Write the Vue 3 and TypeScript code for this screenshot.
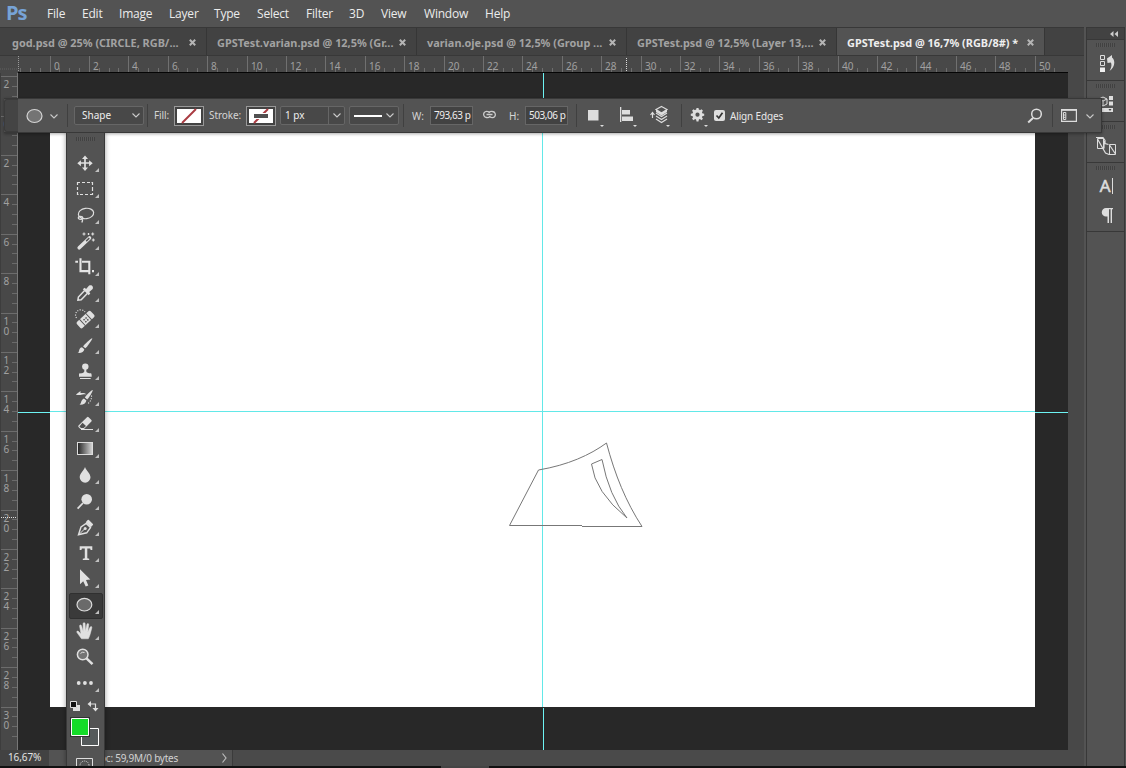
<script setup lang="ts">
interface Tab { title: string; active?: boolean; width: number }
interface Tool { name: string; art: string; active?: boolean; flyout?: boolean }

const menus = [
  ['File', 35], ['Edit', 37], ['Image', 50], ['Layer', 45], ['Type', 43], ['Select', 49],
  ['Filter', 43], ['3D', 32], ['View', 43], ['Window', 61], ['Help', 40],
] as const

const tabs: Tab[] = [
  { title: 'god.psd @ 25% (CIRCLE, RGB/...', width: 206 },
  { title: 'GPSTest.varian.psd @ 12,5% (Gr...', width: 210 },
  { title: 'varian.oje.psd @ 12,5% (Group ...', width: 210 },
  { title: 'GPSTest.psd @ 12,5% (Layer 13,...', width: 210 },
  { title: 'GPSTest.psd @ 16,7% (RGB/8#) *', width: 208, active: true },
]

const unit = 19.7
const hMajor = Array.from({ length: 26 }, (_, i) => ({ label: String(i * 2), at: Math.floor(50 + i * 2 * unit) }))
const hMinor = Array.from({ length: 106 }, (_, i) => i - 3)
  .filter(i => i % 4 !== 0 && 50 + i * unit / 2 < 1068)
  .map(i => Math.floor(50 + i * unit / 2))
const vMajor = Array.from({ length: 17 }, (_, i) => i * 2 - 2)
  .map(n => ({ digits: String(Math.abs(n)).split(''), at: Math.floor(116 + n * unit) - 73 }))
  .filter(m => m.at < 677)
const vMinor = Array.from({ length: 70 }, (_, i) => i - 3)
  .filter(i => i % 4 !== 0 && 43 + i * unit / 2 < 677)
  .map(i => Math.floor(43 + i * unit / 2))

const tools: Tool[] = [
  { name: 'Move', art: '<path d="M12 6v12M6 12h12" stroke="#e0e0e0" stroke-width="1.7"/><path d="M12 4.500l3 3.6H9zM12 20l3-3.6H9zM4.300 12.200l3.600-3v6zM19.700 12.200l-3.600-3v6z"/>' },
  { name: 'Marquee', art: '<path d="M4.500 8V5.500H7M9 5.500h3M14 5.500h3M18.500 5.500h1V8M19.500 10v4M19.500 16v1.500H17M15 17.500h-3M10 17.500H7M5.500 17.500h-1V15M4.500 13v-3" fill="none" stroke="#e0e0e0" stroke-width="1.2"/>' },
  { name: 'Lasso', art: '<g fill="none" stroke="#dedede" stroke-width="1.2"><ellipse cx="13" cy="10.500" rx="7.700" ry="5.200" transform="rotate(-8 13 10.500)"/><ellipse cx="7.500" cy="14.800" rx="2.200" ry="1.500"/><path d="M8.500 15.500q2 2 .2 4"/></g>' },
  { name: 'Magic wand', art: '<path d="M6.200 18.800L16.500 9" stroke="#e0e0e0" stroke-width="3.600" stroke-linecap="round"/><path d="M13.200 12.100L16.300 9.100" stroke="#555" stroke-width="1.500"/><path d="M11 3.500v3M9.500 5h3M19.700 3.500v3M18.200 5h3M20.300 9.500v3M18.800 11h3M15.500 4v2M14.700 5h1.700" stroke="#e0e0e0" stroke-width="1.100"/>' },
  { name: 'Crop', art: '<path d="M7.500 3.300v12.800H17M19 16.100h2M2.300 6.800H5M9 6.800h7.300v12.500" fill="none" stroke="#e4e4e4" stroke-width="2.100"/>' },
  { name: 'Eyedropper', art: '<path d="M11.600 9.500L5.400 16l-.5 3.200 3.300-.5 6.300-6.400" fill="none" stroke="#e0e0e0" stroke-width="1.500"/><path d="M9.800 8.300l1.800-1.500 1.500 1.100 2.800-3.200c2.500-1.700 5.300 1.100 3.500 3.600L16.200 11l1.100 1.500-1.600 1.700z"/>' },
  { name: 'Healing brush', art: '<g transform="rotate(-43 12.500 12.500)"><rect x="3" y="8.500" width="19" height="8.200" rx="1.800"/><path d="M8.200 8v9M16.800 8v9" stroke="#555" stroke-width="1"/><path d="M10.500 11h1.500v1.500h-1.500zM13.200 11h1.500v1.500h-1.500zM10.500 13.600h1.500v1.500h-1.500zM13.200 13.600h1.500v1.500h-1.500z" fill="#505050"/></g><path d="M3.500 11A4.600 4.600 0 0 1 12 5" fill="none" stroke="#e0e0e0" stroke-width="1.200" stroke-dasharray="1.100 1.400"/>' },
  { name: 'Brush', art: '<path d="M19.300 5.200c.6.600-5.800 9.700-7.100 10L10 13.300C10.800 11.900 18.600 4.600 19.300 5.200z"/><path d="M9 14.200l2.300 2.100c-.2 3-3.700 4.100-6.800 3.500 1.900-.9 1.300-2 2-3.600.5-1.200 1.500-1.900 2.500-2z"/>' },
  { name: 'Clone stamp', art: '<circle cx="12.300" cy="7.600" r="3.200"/><path d="M11.300 9h2v3.200c0 1.600 2.200 2 4.700 2 .7.500.7 2.500.7 3.500H6v-3c.5-.6 5.300 0 5.300-2.500zM7 19.100h10.700v1H7z"/>' },
  { name: 'History brush', art: '<path d="M19.700 5.100c.6.600-4.200 8.800-5.500 9.300l-2.300-1.800C12.300 11.200 19 4.500 19.700 5.100z"/><path d="M10.900 13.500l2.500 2c-.5 3.300-3.800 4.500-6.900 4.100 1.600-.9 1.300-2.100 2-3.600.6-1.200 1.300-2.100 2.400-2.500zM3.300 9.200L7.500 6v2.100c2.400-.4 4.300-.2 6 1.300-2.200-.3-4.700.2-6.200.7L3.300 10z"/><path d="M18.500 10.500q.5 5.500-4.500 8.700" fill="none" stroke="#e0e0e0" stroke-width="1.100" stroke-dasharray="1.100 1.500"/>' },
  { name: 'Eraser', art: '<path d="M14 6.200q.8-.7 1.600 0l2.800 2.700q.7.800 0 1.500L11 18H7.500l-2-2q-.6-.8 0-1.500z"/><path d="M9.500 11.700l3.500 3.200-2.300 2.200H8l-1.600-1.700z" fill="#505050"/><path d="M8 18.500h12" stroke="#e0e0e0"/>' },
  { name: 'Gradient', art: '<defs><linearGradient id="toolGradient"><stop offset="0" stop-color="#222"/><stop offset="1" stop-color="#d8d8d8"/></linearGradient></defs><rect x="4.500" y="5.500" width="15" height="12" fill="url(#toolGradient)" stroke="#ddd"/>' },
  { name: 'Blur', art: '<path d="M12 4c1 3.500 5.500 6.400 5.500 10.300A5.400 5.400 0 0 1 6.700 14.300C6.700 10.400 11 7.500 12 4z"/>' },
  { name: 'Dodge', art: '<circle cx="13.700" cy="10.200" r="5.300"/><path d="M10 14l-5.400 5.600" stroke="#e0e0e0" stroke-width="1.800"/>' },
  { name: 'Pen', art: '<path d="M5.500 19.700L8 12l5.200-3.600 4.300 4.200-3.800 5.200z" fill="none" stroke="#e0e0e0" stroke-width="1.400"/><path d="M6 19.500l5.800-5.800" stroke="#e0e0e0"/><circle cx="12.200" cy="13.400" r="1.500"/><path d="M12.700 7.300l2-2.300q.7-.5 1.200 0l4 4.100q.4.500 0 1l-2.100 2.200z"/>' },
  { name: 'Type', art: '<path d="M6.700 5.300h12.600v3.800h-1.700l-.4-1.700h-2.900v9.900l1.900.5v1.300h-6.400v-1.300l2-.5V7.400H8.900l-.5 1.700H6.700z"/>' },
  { name: 'Path selection', art: '<path d="M7 2.300l10.300 10.300-4.300.3 2.300 5.600-2.600 1.100-2.500-5.400L7 17.200z"/>' },
  { name: 'Ellipse', art: '<ellipse cx="11.400" cy="11.700" rx="7.400" ry="6.300" fill="#6a6a6a" stroke="#dcdcdc" stroke-width="1.200"/>', active: true },
  { name: 'Hand', art: '<path d="M8.500 19.800L4 13.600c-.8-1.400.7-2.100 1.600-1.100L8 15 6.600 7.200c-.2-1.500 1.500-1.800 1.900-.4l1.600 5.400V4.700c0-1.400 1.900-1.400 2 0l.4 7.200 1.400-6.500c.4-1.400 2-1 1.800.4l-.9 7.100 2.300-4.700c.7-1.300 2.100-.6 1.700.7-1.200 4.400-1.800 8-3.500 10.900z" stroke="#e0e0e0" stroke-width=".5"/>' },
  { name: 'Zoom', art: '<circle cx="9.700" cy="9.500" r="5.300" fill="#747474" stroke="#e0e0e0" stroke-width="1.500"/><path d="M7.500 8.500Q9 6.500 11.500 7.500" fill="none" stroke="#ddd"/><path d="M13.500 13.400l6 5.700" stroke="#e0e0e0" stroke-width="2.500"/>', flyout: false },
  { name: 'More', art: '<circle cx="5.700" cy="12" r="1.900"/><circle cx="11.900" cy="12" r="1.900"/><circle cx="18" cy="12" r="1.900"/>' },
]
</script>

<template>
  <div class="app">
    <header class="menu-bar">
      <span class="logo">Ps</span>
      <span v-for="m in menus" :key="m[0]" class="menu" :style="{ width: m[1] + 'px' }">{{ m[0] }}</span>
    </header>

    <div class="body">
      <main class="main">
        <nav class="tabs">
          <div v-for="t in tabs" :key="t.title" class="tab" :class="{ active: t.active }" :style="{ width: t.width + 'px' }">
            <span>{{ t.title }}</span>
            <svg class="close" width="7" height="7" viewBox="0 0 7 7"><path d="M.8.8l5.400 5.400M6.200.800L.8 6.200" stroke="currentColor" stroke-width="2" /></svg>
          </div>
        </nav>

        <svg class="ruler-h" width="1084" height="17">
          <rect width="1068" height="17" fill="#484848" />
          <path d="M0 13h18" stroke="#606060" stroke-dasharray="1 1" />
          <path d="M18.500 0v15" stroke="#999" stroke-dasharray="1 1" />
          <path v-for="x in hMinor" :key="'n' + x" :d="`M${x + .5} 12v4`" stroke="#6d6d6d" />
          <g v-for="m in hMajor" :key="m.label">
            <path :d="`M${m.at + .5} 0v16`" stroke="#707070" />
            <text :x="m.at + 4" y="14">{{ m.label }}</text>
          </g>
          <path d="M626.500 2v14" stroke="#ddd" stroke-dasharray="1 1" />
          <path d="M18 16.500h1050" stroke="#050505" />
        </svg>

        <div class="work-row">
          <svg class="ruler-v" width="18" height="677">
            <rect width="18" height="677" fill="#484848" />
            <path v-for="y in vMinor" :key="'n' + y" :d="`M12 ${y + .5}h5`" stroke="#6a6a6a" />
            <g v-for="m in vMajor" :key="m.at">
              <path :d="`M1 ${m.at + .5}h16`" stroke="#6c6c6c" />
              <text v-for="(d, i) in m.digits" :key="i" x="3.500" :y="m.at + 11.500 + i * 10">{{ d }}</text>
            </g>
            <path d="M1 444.500h16" stroke="#ddd" stroke-dasharray="1 1" />
            <path d="M.5 0v677" stroke="#3d3d3d" />
            <path d="M17.500 0v677" stroke="#777" />
          </svg>
          <svg class="canvas" width="1050" height="677">
            <rect width="1050" height="677" fill="#282828" />
            <rect x="32" y="40" width="985" height="594" fill="#fff" />
            <g fill="#6df3f3">
              <rect x="525" width="1" height="40" /><rect x="525" y="635" width="1" height="42" />
              <rect y="339" width="32" height="1" /><rect x="1017" y="339" width="33" height="1" />
            </g>
            <g fill="#62e8e8">
              <rect x="524" y="40" width="1" height="594" /><rect x="32" y="338" width="985" height="1" />
            </g>
            <g fill="none" stroke="#777">
              <path d="M564 453.500H624C608 429 597 402 588.500 370C572 382 550 392 520.500 397L491.500 452.500H564" />
              <path d="M573.500 391L584 386.500Q591 423 609 445Q577 419 573.500 391z" />
            </g>
          </svg>
          <div class="scroll-v"></div>
        </div>

        <footer class="status">
          <span class="zoom-value">16,67%</span>
          <span class="doc">Doc: 59,9M/0 bytes</span>
          <svg width="8" height="12" viewBox="0 0 8 12"><path d="M1.500 1.500L5 6 1.500 10.500" fill="none" stroke="#bbb" stroke-width="1.200" /></svg>
          <span class="status-rest"></span>
        </footer>
      </main>

      <aside class="dock">
        <div class="dock-head">
          <svg width="8" height="6" viewBox="0 0 8 6"><path d="M3.500 0v6L0 3zM8 0v6L4.500 3z" fill="#ccc" /></svg>
        </div>
        <div class="group">
          <i class="grip"></i>
          <svg width="18" height="18" viewBox="0 0 18 18">
            <path d="M3.500 1.500h4v4h-4zM3.500 7.500h4v4h-4z" fill="none" stroke="#ddd" /><path d="M3 13.500h5v4.500H3z" fill="#f0f0f0" />
            <path d="M10 4.500L15 1v2.500c4 3.500 2.500 10-2.500 13.500 1.800-3 2.700-6.800 1.200-8.500L10.500 9z" fill="#ddd" />
          </svg>
        </div>
        <div class="group">
          <i class="grip"></i>
          <svg width="18" height="18" viewBox="0 0 18 18">
            <path d="M2 4l4-2 4 2v5l-4 2-4-2zM2 4l4 2 4-2M6 6v5" fill="none" stroke="#ddd" /><path d="M12 1h4v4h-4zM12 6.500h4v4h-4zM3 13h13v4H3z" fill="#ddd" /><path d="M11.500 14h3L13 16z" fill="#444" />
          </svg>
        </div>
        <div class="group">
          <i class="grip"></i>
          <svg width="20" height="20" viewBox="0 0 20 20">
            <path d="M1.500 2.500h6v10h-6zM13.500 8.500h6v10h-6z" fill="none" stroke="#ddd" />
            <path d="M0 1.500h7l2 3v3l3.500 1M1.500 3l8 14 3.500 1.500h3M8 12.500V5M13.500 9l6 9" fill="none" stroke="#ddd" stroke-width="1.200" />
          </svg>
        </div>
        <div class="group tall">
          <i class="grip"></i>
          <div class="char-icon"><span>A</span><b></b></div>
          <svg class="para" width="12" height="15" viewBox="0 0 12 15"><path d="M5 0h7v1.200h-1V15H9.600V1.200H8V15H6.500V8.500H5A4.200 4.200 0 0 1 5 0z" fill="#ddd" /></svg>
        </div>
      </aside>

      <section class="options">
        <div class="handle"></div>
        <svg class="shape-icon" width="18" height="16" viewBox="0 0 18 16"><ellipse cx="9.500" cy="8" rx="7.500" ry="6.500" fill="#747474" stroke="#d4d4d4" stroke-width="1.200" /></svg>
        <svg class="chev c1" width="8" height="5" viewBox="0 0 8 5"><path d="M.5.5L4 4 7.500.5" /></svg>
        <i class="sep s1"></i>
        <div class="field mode"><span>Shape</span><svg class="chev" width="8" height="5" viewBox="0 0 8 5"><path d="M.5.5L4 4 7.500.5" /></svg></div>
        <i class="sep s2"></i>
        <label class="fill-label">Fill:</label>
        <svg class="swatch" width="30" height="20" viewBox="0 0 30 20"><rect x=".5" y=".5" width="29" height="19" fill="#424242" stroke="#999" /><rect x="3" y="3" width="24" height="14" fill="#fff" /><path d="M8 17L22 3" stroke="#a93b42" stroke-width="2" /></svg>
        <label class="stroke-label">Stroke:</label>
        <svg class="swatch" width="30" height="20" viewBox="0 0 30 20"><rect x=".5" y=".5" width="29" height="19" fill="#424242" stroke="#999" /><rect x="3" y="3" width="24" height="14" fill="#fff" /><path d="M8 17L22 3" stroke="#a93b42" stroke-width="2" /><path d="M7 7h16v6H7z" fill="#fff" /><path d="M8 8h14v4H8z" fill="#505050" /></svg>
        <div class="field size"><span>1 px</span><div class="drop"><svg class="chev" width="8" height="5" viewBox="0 0 8 5"><path d="M.5.5L4 4 7.500.5" /></svg></div></div>
        <div class="field line"><b></b><svg class="chev" width="8" height="5" viewBox="0 0 8 5"><path d="M.5.5L4 4 7.500.5" /></svg></div>
        <i class="sep s3"></i>
        <label class="w-label">W:</label>
        <div class="field num"><span>793,63 p</span></div>
        <svg class="link" width="15" height="9" viewBox="0 0 15 9"><path d="M8 6.500Q6.500 8 4.500 7.500a3.100 3.100 0 1 1 3-4.500M7 2.500Q8.500 1 10.500 1.500a3.100 3.100 0 1 1-3 4.500M4.500 4.500h6" fill="none" stroke="#ccc" stroke-width="1.300" /></svg>
        <label class="h-label">H:</label>
        <div class="field num"><span>503,06 p</span></div>
        <i class="sep s4"></i>
        <svg class="op o1" width="19" height="22" viewBox="0 0 19 22"><path d="M3 5h10.500v10.500H3zM15 20h4l-2 2z" fill="#ddd" /></svg>
        <svg class="op o2" width="18" height="22" viewBox="0 0 18 22"><path d="M1 2h1.300v15H1zM3 5h8v4.500H3zM3 11.500h11V16H3zM14 20h4l-2 2z" fill="#ddd" /></svg>
        <svg class="op o3" width="22" height="22" viewBox="0 0 22 22"><path d="M3.500 13V8.500M1.500 10l2-2.500 2 2.500M12.500 1.500L18 4.500 12.500 8 7 4.500zM7 8l5.500 3.500L18 8M7 11l5.500 3.500L18 11M7 14l5.500 3.500L18 14" fill="none" stroke="#ddd" stroke-width="1.200" /><path d="M12.500 8L18 4.500V7l-5.500 3.500L7 7V4.500z" fill="#ddd" /><path d="M17 20h4l-2 2z" fill="#ddd" /></svg>
        <i class="sep s5"></i>
        <svg class="op o4" width="18" height="22" viewBox="0 0 18 22"><g transform="translate(7.500 9.700)"><circle r="3.600" fill="none" stroke="#ddd" stroke-width="3" /><path v-for="a in 8" :key="a" d="M-1.500-4L-1-6.700H1L1.500-4z" fill="#ddd" :transform="`rotate(${a * 45})`" /></g><path d="M14 20h4l-2 2z" fill="#ddd" /></svg>
        <svg class="check" width="11" height="11" viewBox="0 0 11 11"><rect width="11" height="11" rx="2" fill="#ddd" /><path d="M2.500 5.500L4.800 8 8.500 2.800" fill="none" stroke="#333" stroke-width="1.700" /></svg>
        <label class="align-label">Align Edges</label>
        <svg class="search" width="16" height="16" viewBox="0 0 16 16"><circle cx="9.500" cy="6" r="4.800" fill="none" stroke="#ddd" stroke-width="1.500" /><path d="M6 10l-4.800 4.500" stroke="#ddd" stroke-width="2" /></svg>
        <i class="sep s6"></i>
        <svg class="workspace" width="16" height="13" viewBox="0 0 16 13"><path d="M.6 1h14.800v11.400H.6z" fill="none" stroke="#ddd" stroke-width="1.200" /><path d="M0 0h16v1.700H0z" fill="#ddd" /><path d="M2.500 3.500h2.300v7H2.500zM2.500 6h2M2.500 8.300h2" fill="none" stroke="#ddd" /></svg>
        <svg class="chev c2" width="8" height="5" viewBox="0 0 8 5"><path d="M.5.5L4 4 7.500.5" /></svg>
      </section>

      <section class="tools">
        <div class="tools-head"><i class="grip"></i></div>
        <div v-for="t in tools" :key="t.name" class="tool" :class="{ active: t.active }">
          <svg width="24" height="24" viewBox="0 0 24 24" fill="#e0e0e0" v-html="t.art"></svg>
          <i v-if="t.flyout !== false" class="corner"></i>
        </div>
        <svg class="colors" width="39" height="72" viewBox="0 0 39 72">
          <path d="M7 9h7v6H7z" fill="#ddd" /><path d="M4.500 5.500h6v6h-6z" fill="#111" stroke="#ddd" />
          <path d="M23 8h6.500v5.500" fill="none" stroke="#ddd" stroke-width="1.200" /><path d="M25 5v6l-3.500-3zM26.500 12h6l-3 3.500z" fill="#ddd" />
          <path d="M15.500 32.500h17v17h-17z" fill="#555a5b" stroke="#fff" />
          <path d="M4 21h20v20H4z" fill="#333" /><path d="M5.500 22.500h17v17h-17z" fill="#14dc28" stroke="#fff" />
          <path d="M10.500 72V62.500h16V72" fill="none" stroke="#ddd" /><circle cx="18.500" cy="69.500" r="4.500" fill="none" stroke="#ddd" stroke-dasharray="1 1" />
        </svg>
      </section>
    </div>
    <div class="edge"><i></i></div>
  </div>
</template>

<style>
body { margin: 0; background: #535353; overflow: hidden; }
</style>

<style scoped>
* { box-sizing: border-box; }
.app { width: 1126px; height: 768px; display: flex; flex-direction: column; overflow: hidden; background: #535353; color: #e4e4e4; font: 10px "Noto Sans", "Open Sans", sans-serif; }
.menu-bar { height: 27px; flex: none; display: flex; align-items: center; background: #535353; font: 12px/26px "Open Sans", sans-serif; letter-spacing: -.2px; color: #ececec; }
.logo { width: 47px; padding-left: 6px; font: bold 20px/24px "Open Sans", sans-serif; letter-spacing: -1px; color: #77a3d6; margin-top: -2px; }
.menu { flex: none; white-space: nowrap; }
.body { position: relative; height: 739px; display: flex; }
.main { width: 1084px; display: flex; flex-direction: column; background: #484848; }
.tabs { height: 29px; display: flex; background: #424242; border-top: 1px solid #383838; border-bottom: 1px solid #383838; padding-left: 1px; }
.tab { display: flex; justify-content: space-between; align-items: center; padding: 3px 10px 0 10px; border-right: 1px solid #363636; color: #a2a2a2; font: bold 10.9px/16px "Noto Sans", sans-serif; white-space: nowrap; }
.tab:first-child { padding-left: 11px; }
.tab.active { background: #535353; color: #eee; }
.close { color: #b5b5b5; flex: none; margin-bottom: 2px; }
.ruler-h, .ruler-v, .canvas { display: block; flex: none; }
.ruler-h text, .ruler-v text { fill: #a0a0a0; font: 10px "Noto Sans", sans-serif; }
.work-row { display: flex; height: 677px; }
.scroll-v { width: 16px; background: #484848; }
.status { display: flex; align-items: center; height: 16px; background: #535353; }
.zoom-value { width: 49px; height: 16px; padding-left: 8px; background: #424242; line-height: 15px; letter-spacing: -.1px; }
.doc { width: 135px; padding-left: 44px; white-space: nowrap; letter-spacing: -.25px; line-height: 16px; color: #d2d2d2; }
.status svg { margin-left: 37px; }
.status-rest { flex: 1; height: 16px; margin-left: 3px; background: #4a4a4a; border-left: 1px solid #3b3b3b; }
.dock { width: 39px; margin-left: 2px; border: solid #383838; border-width: 0 1px; background: #535353; }
.dock-head { height: 13px; background: #424242; border-top: 1px solid #383838; border-bottom: 1px solid #383838; display: flex; justify-content: flex-end; align-items: center; padding-right: 6px; }
.group { height: 41px; border-bottom: 1px solid #383838; display: flex; flex-direction: column; align-items: center; padding-top: 3px; }
.group > svg { margin-top: 7px; }
.group.tall { height: 69px; }
.grip { display: block; width: 19px; height: 4px; background: repeating-linear-gradient(90deg, #414141 0 1px, #575757 1px 2px); }
.char-icon { display: flex; align-items: center; height: 18px; margin: 7px 0 0 2px; font: 17px/18px "Open Sans", sans-serif; color: #ddd; -webkit-text-stroke: .6px; }
.char-icon b { width: 1px; height: 16px; margin-left: 2px; background: #ddd; }
.group.tall .para { margin: 13px 0 0 2px; }
.options { position: absolute; left: 4px; top: 71px; width: 1098px; height: 35px; display: flex; align-items: center; background: #535353; border: 1px solid #383838; border-left: 0; white-space: nowrap; box-shadow: 0 1px 3px #0005; }
.handle { width: 14px; height: 33px; background: #444; border: 1px solid #3b3b3b; border-right: 0; border-radius: 3px 0 0 3px; }
.options > * { flex: none; }
.chev { fill: none; stroke: #c9c9c9; stroke-width: 1.1; display: block; }
.shape-icon { margin-left: 7px; }
.c1 { margin-left: 7px; margin-top: 2px; }
.sep { width: 1px; height: 23px; background: #404040; }
.s1 { margin-left: 9px; }
.field { height: 19px; background: #484848; border: 1px solid #666; border-radius: 2px; display: flex; align-items: center; overflow: hidden; line-height: 17px; color: #eee; }
.mode { width: 70px; margin-left: 6px; padding: 0 3px 0 7px; justify-content: space-between; }
.s2 { margin-left: 3px; }
.fill-label { width: 20px; margin-left: 6px; }
.stroke-label { width: 37px; margin-left: 5px; }
.fill-label, .stroke-label { color: #d5d5d5; padding-bottom: 2px; letter-spacing: -.1px; }
.size { width: 65px; margin-left: 4px; padding-left: 4px; justify-content: space-between; }
.drop { width: 16px; height: 19px; border-left: 1px solid #666; display: flex; align-items: center; justify-content: center; }
.line { width: 50px; margin-left: 4px; padding: 0 4px; justify-content: space-between; }
.line b { width: 28px; height: 2px; background: #fff; }
.s3 { margin-left: 4px; }
.w-label { width: 18px; margin-left: 8px; color: #d5d5d5; }
.num { width: 43px; margin-right: -1px; padding-left: 3px; background: #424242; border-radius: 0; letter-spacing: -.45px; }
.link { margin-left: 10px; margin-bottom: 2px; }
.h-label { width: 16px; margin-left: 12px; color: #d5d5d5; }
.s4 { margin-left: 9px; }
.op { align-self: flex-start; margin-top: 6px; }
.o1 { margin-left: 8px; }
.o2 { margin-left: 15px; }
.o3 { margin-left: 12px; }
.s5 { margin-left: 10px; }
.o4 { margin-left: 8px; }
.check { margin-left: 6px; margin-bottom: 1px; }
.align-label { margin-left: 5px; width: 58px; color: #e8e8e8; letter-spacing: -.15px; }
.search { margin-left: auto; }
.s6 { margin-left: 9px; }
.workspace { margin-left: 8px; }
.c2 { margin: 1px 7px 0 9px; }
.tools { position: absolute; left: 66px; top: 106px; width: 39px; height: 633px; background: #535353; border: solid #383838; border-width: 0 1px; box-shadow: 0 0 5px #0006; clip-path: inset(0 -6px 0 -6px); }
.tools-head { height: 17px; display: flex; justify-content: center; padding-top: 4px; }
.tool { position: relative; height: 26px; }
.tool > svg { display: block; margin-left: 6px; position: relative; top: 1px; }
.tool.active::before { content: ""; position: absolute; left: 2px; top: 1px; width: 32px; height: 24px; background: #3a3a3a; border: 1px solid #303030; border-radius: 2px; }
.corner { position: absolute; left: 28px; top: 18px; border-left: 4px solid transparent; border-bottom: 4px solid #c0c0c0; }
.colors { display: block; margin-left: -1px; }
.edge { height: 2px; background: #111; flex: none; }
.edge i { display: block; width: 48px; height: 2px; margin-left: 441px; background: #444; }
</style>
